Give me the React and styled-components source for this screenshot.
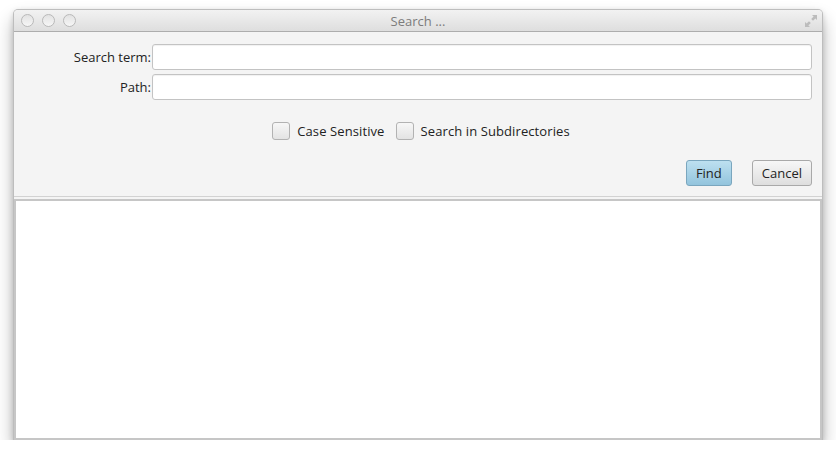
import React from 'react'
import styled, { createGlobalStyle } from 'styled-components'

const Global = createGlobalStyle`
  html, body {
    margin: 0;
    padding: 0;
    background: #ffffff;
  }
  body {
    font-family: 'Open Sans', 'DejaVu Sans', sans-serif;
  }
`

const Page = styled.div`
  padding: 10px 0 0 14px;
`

const Window = styled.div`
  width: 808px;
  height: 430px;
  display: flex;
  flex-direction: column;
  background: #f4f4f4;
  border-radius: 4px 4px 0 0;
  box-shadow: 0 0 0 1px #bdbdbd, 0 10px 18px rgba(0, 0, 0, 0.32), 0 2px 6px rgba(0, 0, 0, 0.2);
  overflow: hidden;
`

const TitleBar = styled.div`
  height: 21px;
  flex: none;
  display: flex;
  align-items: center;
  position: relative;
  padding: 0 7px;
  background: linear-gradient(#f2f2f2, #dedede);
  border-bottom: 1px solid #adadad;
`

const Lights = styled.div`
  display: flex;
  gap: 8px;
`

const Light = styled.span`
  width: 11px;
  height: 11px;
  border-radius: 50%;
  border: 1px solid #b8b8b8;
  background: linear-gradient(#e2e2e2, #f6f6f6);
`

const Title = styled.div`
  position: absolute;
  left: 0;
  right: 0;
  text-align: center;
  font-size: 13px;
  color: #7c7c7c;
  pointer-events: none;
`

const Resize = styled.svg`
  margin-left: auto;
  margin-right: -3px;
`

const Form = styled.div`
  flex: none;
  padding: 12px 10px 10px 0;
  border-bottom: 1px solid #d2d2d2;
  margin-bottom: 2px;
`

const Fields = styled.div`
  display: grid;
  grid-template-columns: 137px 1fr;
  column-gap: 1px;
  row-gap: 4px;
  align-items: center;
`

const Label = styled.label`
  text-align: right;
  font-size: 13px;
  color: #222;
`

const Input = styled.div`
  height: 24px;
  background: #fff;
  border: 1px solid #c3c3c3;
  border-radius: 3px;
  box-shadow: inset 0 1px 1px rgba(0, 0, 0, 0.06);
`

const Options = styled.div`
  display: flex;
  justify-content: center;
  gap: 11px;
  margin-top: 22px;
  padding-left: 16px;
`

const Option = styled.label`
  display: flex;
  align-items: center;
  gap: 7px;
  font-size: 13px;
  letter-spacing: 0.1px;
  color: #222;
`

const Box = styled.span`
  width: 16px;
  height: 16px;
  border: 1px solid #b2b2b2;
  border-radius: 3px;
  background: linear-gradient(#f7f7f7, #e3e3e3);
`

const Actions = styled.div`
  display: flex;
  justify-content: flex-end;
  gap: 20px;
  margin-top: 20px;
`

const Button = styled.button`
  height: 26px;
  padding: 0 9px;
  font-family: inherit;
  font-size: 13px;
  color: #222;
  border-radius: 3px;
  border: 1px solid ${p => (p.primary ? '#7aa6be' : '#a9a9a9')};
  background: ${p => (p.primary
    ? 'linear-gradient(#bde0f0, #93c4dd)'
    : 'linear-gradient(#f7f7f7, #dedede)')};
`

const Results = styled.div`
  flex: 1;
  background: #fff;
  border: 2px solid #c6c6c6;
`

export default function App() {
  return (
    <Page>
      <Global />
      <Window>
        <TitleBar>
          <Lights>
            <Light />
            <Light />
            <Light />
          </Lights>
          <Title>Search ...</Title>
          <Resize width="14" height="14" viewBox="0 0 14 14">
            <path d="M8 1 L13 1 L13 6 L11.4 4.4 L9 6.8 L7.2 5 L9.6 2.6 Z" fill="#bcbcbc" />
            <path d="M1 8 L1 13 L6 13 L4.4 11.4 L6.8 9 L5 7.2 L2.6 9.6 Z" fill="#bcbcbc" />
          </Resize>
        </TitleBar>
        <Form>
          <Fields>
            <Label>Search term:</Label>
            <Input />
            <Label>Path:</Label>
            <Input />
          </Fields>
          <Options>
            <Option><Box />Case Sensitive</Option>
            <Option><Box />Search in Subdirectories</Option>
          </Options>
          <Actions>
            <Button primary>Find</Button>
            <Button>Cancel</Button>
          </Actions>
        </Form>
        <Results />
      </Window>
    </Page>
  )
}
